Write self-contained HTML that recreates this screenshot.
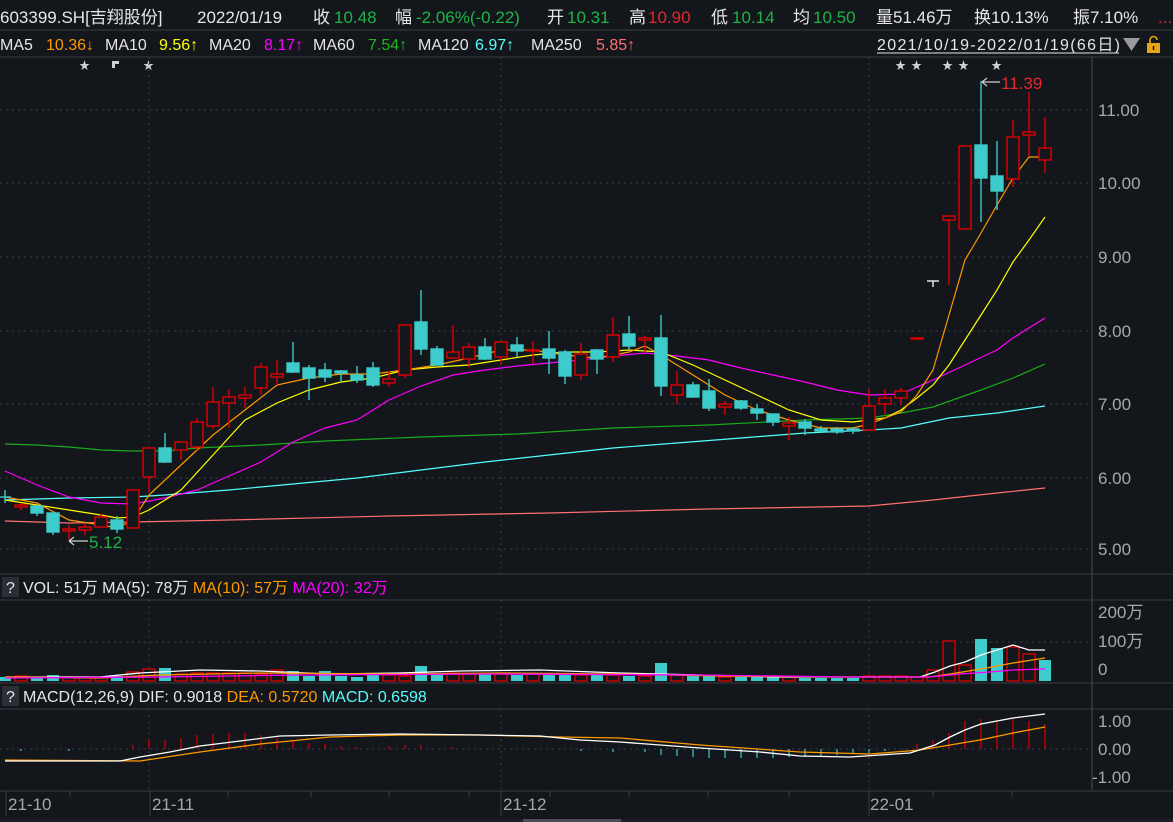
<!DOCTYPE html>
<html><head><meta charset="utf-8">
<style>
html,body{margin:0;padding:0;background:#13161b;width:1173px;height:822px;overflow:hidden}
svg{display:block}
text{font-family:"Liberation Sans","Noto Sans CJK SC",sans-serif}
</style></head>
<body>
<svg width="1173" height="822" viewBox="0 0 1173 822" xmlns="http://www.w3.org/2000/svg">
<rect width="1173" height="822" fill="#13161b"/>
<g font-size="17" fill="#e6e6e6">
<text x="0" y="23">603399.SH[吉翔股份]</text>
<text x="197" y="23">2022/01/19</text>
<text x="313" y="23">收</text><text x="334" y="23" fill="#1db446">10.48</text>
<text x="395" y="23">幅</text><text x="416" y="23" fill="#1db446">-2.06%(-0.22)</text>
<text x="547" y="23">开</text><text x="567" y="23" fill="#1db446">10.31</text>
<text x="629" y="23">高</text><text x="648" y="23" fill="#e8262b">10.90</text>
<text x="711" y="23">低</text><text x="732" y="23" fill="#1db446">10.14</text>
<text x="793" y="23">均</text><text x="813" y="23" fill="#1db446">10.50</text>
<text x="876" y="23">量51.46万</text>
<text x="974" y="23">换10.13%</text>
<text x="1073" y="23">振7.10%</text>
<text x="1158" y="23" fill="#e8262b">...</text>
</g>
<line x1="0" y1="30" x2="1173" y2="30" stroke="#3a3d44"/>
<g font-size="16" fill="#e6e6e6">
<text x="0" y="50">MA5</text><text x="46" y="50" fill="#ff9900">10.36↓</text>
<text x="105" y="50">MA10</text><text x="159" y="50" fill="#ffff00">9.56↑</text>
<text x="209" y="50">MA20</text><text x="264" y="50" fill="#ff00ff">8.17↑</text>
<text x="313" y="50">MA60</text><text x="368" y="50" fill="#1db41d">7.54↑</text>
<text x="418" y="50">MA120</text><text x="475" y="50" fill="#55ffff">6.97↑</text>
<text x="531" y="50">MA250</text><text x="596" y="50" fill="#ff6f6f">5.85↑</text>
<text x="877" y="50" textLength="243">2021/10/19-2022/01/19(66日)</text>
</g>
<line x1="877" y1="53" x2="1119" y2="53" stroke="#e6e6e6"/>
<polygon points="1123,38 1140,38 1131.5,51" fill="#9a9a9a"/>
<rect x="1147" y="43" width="13" height="10" fill="#e8a317"/>
<path d="M1150,43 v-3 a3.5,3.5 0 0 1 7,0" stroke="#e8a317" stroke-width="1.6" fill="none"/>
<line x1="1153.5" y1="46" x2="1153.5" y2="50" stroke="#13161b" stroke-width="1.5"/>
<line x1="0" y1="57" x2="1173" y2="57" stroke="#3a3d44"/>
<g font-size="11" fill="#cfcfcf">
<text x="79" y="69">★</text><text x="143" y="69">★</text>
<text x="895" y="69">★</text><text x="911" y="69">★</text><text x="942" y="69">★</text><text x="958" y="69">★</text><text x="991" y="69">★</text>
</g>
<path d="M112,61h7v3h-4v4h-3z" fill="#cfcfcf"/>
<line x1="1092" y1="57" x2="1092" y2="790" stroke="#4a4d54"/>
<g stroke="#3a3d44" stroke-dasharray="2,4">
<line x1="0" y1="110" x2="1092" y2="110"/><line x1="0" y1="183" x2="1092" y2="183"/>
<line x1="0" y1="257" x2="1092" y2="257"/><line x1="0" y1="331" x2="1092" y2="331"/>
<line x1="0" y1="404" x2="1092" y2="404"/><line x1="0" y1="478" x2="1092" y2="478"/>
<line x1="0" y1="549" x2="1092" y2="549"/>
<line x1="149" y1="57" x2="149" y2="574"/><line x1="501" y1="57" x2="501" y2="574"/><line x1="869" y1="57" x2="869" y2="574"/>
<line x1="0" y1="642" x2="1092" y2="642"/>
<line x1="149" y1="600" x2="149" y2="683"/><line x1="501" y1="600" x2="501" y2="683"/><line x1="869" y1="600" x2="869" y2="683"/>
<line x1="0" y1="749" x2="1092" y2="749"/>
<line x1="149" y1="709" x2="149" y2="790"/><line x1="501" y1="709" x2="501" y2="790"/><line x1="869" y1="709" x2="869" y2="790"/>
</g>
<g font-size="17" fill="#a8a8a8">
<text x="1098" y="116">11.00</text><text x="1098" y="189">10.00</text><text x="1098" y="263">9.00</text>
<text x="1098" y="337">8.00</text><text x="1098" y="410">7.00</text><text x="1098" y="484">6.00</text>
<text x="1098" y="555">5.00</text>
<text x="1098" y="618">200万</text><text x="1098" y="647">100万</text><text x="1098" y="675">0</text>
<text x="1098" y="727">1.00</text><text x="1098" y="755">0.00</text><text x="1092" y="783">-1.00</text>
</g>
<g fill="none" stroke-width="1.2">
<polyline stroke="#ff7070" points="5,521 69,523 133,522 229,520 389,516 549,513 709,509 869,506 933,500 997,493 1045,488"/>
<polyline stroke="#55ffff" points="5,500 69,498 133,497 165,495 229,490 293,484 357,478 421,470 485,462 549,455 613,448 677,443 741,438 805,433 869,430 901,428 949,418 997,413 1045,406"/>
<polyline stroke="#1aaa1a" points="5,444 37,445 69,447 101,450 133,451 165,451 197,448 261,445 325,441 421,437 517,434 613,428 709,425 805,420 869,418 901,413 933,407 981,390 1013,378 1045,364"/>
<polyline stroke="#ff00ff" points="5,471 37,485 69,497 101,503 133,504 165,498 197,490 229,476 261,462 293,442 325,428 357,420 389,400 421,386 453,375 485,370 517,366 549,363 581,360 613,356 645,353 677,356 709,360 741,368 773,375 805,382 837,390 869,395 901,394 933,380 965,365 997,350 1013,338 1045,318"/>
<polyline stroke="#ffff00" points="5,500 37,505 69,510 101,515 117,518 133,517 149,510 181,490 213,455 245,420 277,403 309,390 341,382 373,378 405,370 437,367 469,365 501,360 533,355 565,352 597,352 629,350 661,352 693,365 725,380 757,395 789,410 821,420 853,422 885,418 901,410 917,398 933,385 949,365 965,340 981,315 997,290 1013,262 1029,240 1045,217"/>
<polyline stroke="#ff9900" points="5,497 37,503 69,520 101,525 117,528 133,520 149,495 181,465 213,435 245,410 277,385 309,378 341,374 373,374 405,370 437,365 469,358 501,350 533,350 565,355 597,358 629,352 645,346 661,355 693,375 725,395 757,410 789,420 821,428 853,428 869,424 901,412 917,395 933,370 949,315 965,260 981,233 997,205 1013,178 1029,157 1045,157"/>
</g>
<g stroke="#e00000" stroke-width="1.4" fill="#13161b">
<line x1="21" y1="503" x2="21" y2="510"/><rect x="15" y="505" width="12" height="2"/>
<line x1="69" y1="525" x2="69" y2="540"/><rect x="63" y="529" width="12" height="2"/>
<line x1="85" y1="524" x2="85" y2="535"/><rect x="79" y="527" width="12" height="3"/>
<line x1="101" y1="514" x2="101" y2="527"/><rect x="95" y="517" width="12" height="10"/>
<rect x="127" y="490" width="12" height="38"/>
<line x1="149" y1="448" x2="149" y2="492"/><rect x="143" y="448" width="12" height="29"/>
<line x1="181" y1="442" x2="181" y2="460"/><rect x="175" y="442" width="12" height="8"/>
<line x1="197" y1="418" x2="197" y2="450"/><rect x="191" y="422" width="12" height="25"/>
<line x1="213" y1="387" x2="213" y2="429"/><rect x="207" y="402" width="12" height="24"/>
<line x1="229" y1="389" x2="229" y2="428"/><rect x="223" y="397" width="12" height="6"/>
<line x1="245" y1="387" x2="245" y2="408"/><rect x="239" y="395" width="12" height="3"/>
<line x1="261" y1="363" x2="261" y2="395"/><rect x="255" y="367" width="12" height="21"/>
<line x1="277" y1="360" x2="277" y2="385"/><rect x="271" y="374" width="12" height="3"/>
<line x1="389" y1="371" x2="389" y2="387"/><rect x="383" y="379" width="12" height="4"/>
<line x1="405" y1="325" x2="405" y2="378"/><rect x="399" y="325" width="12" height="50"/>
<line x1="453" y1="325" x2="453" y2="358"/><rect x="447" y="352" width="12" height="6"/>
<line x1="469" y1="343" x2="469" y2="367"/><rect x="463" y="347" width="12" height="12"/>
<line x1="501" y1="341" x2="501" y2="365"/><rect x="495" y="342" width="12" height="15"/>
<line x1="533" y1="341" x2="533" y2="364"/><rect x="527" y="350" width="12" height="1"/>
<line x1="581" y1="343" x2="581" y2="380"/><rect x="575" y="354" width="12" height="21"/>
<line x1="613" y1="317" x2="613" y2="362"/><rect x="607" y="335" width="12" height="22"/>
<line x1="645" y1="336" x2="645" y2="352"/><rect x="639" y="338" width="12" height="2"/>
<line x1="677" y1="371" x2="677" y2="404"/><rect x="671" y="385" width="12" height="10"/>
<line x1="725" y1="401" x2="725" y2="415"/><rect x="719" y="404" width="12" height="3"/>
<line x1="789" y1="417" x2="789" y2="440"/><rect x="783" y="423" width="12" height="3"/>
<line x1="869" y1="389" x2="869" y2="430"/><rect x="863" y="406" width="12" height="24"/>
<line x1="885" y1="389" x2="885" y2="414"/><rect x="879" y="398" width="12" height="6"/>
<line x1="901" y1="388" x2="901" y2="405"/><rect x="895" y="391" width="12" height="7"/>
<rect x="911" y="338" width="12" height="1"/>
<line x1="949" y1="216" x2="949" y2="285"/><rect x="943" y="216" width="12" height="4"/>
<rect x="959" y="146" width="12" height="83"/>
<line x1="1013" y1="120" x2="1013" y2="187"/><rect x="1007" y="137" width="12" height="42"/>
<line x1="1029" y1="92" x2="1029" y2="156"/><rect x="1023" y="132" width="12" height="3"/>
<line x1="1045" y1="117" x2="1045" y2="173"/><rect x="1039" y="148" width="12" height="12"/>
</g>
<g stroke="#3dcbcb" stroke-width="1.4" fill="#3dcbcb">
<line x1="5" y1="490" x2="5" y2="503"/><line x1="0" y1="497" x2="11" y2="497"/>
<line x1="37" y1="506" x2="37" y2="516"/><rect x="31" y="506" width="12" height="7"/>
<line x1="53" y1="513" x2="53" y2="535"/><rect x="47" y="513" width="12" height="19"/>
<line x1="117" y1="516" x2="117" y2="533"/><rect x="111" y="520" width="12" height="9"/>
<line x1="165" y1="433" x2="165" y2="463"/><rect x="159" y="448" width="12" height="14"/>
<line x1="293" y1="342" x2="293" y2="373"/><rect x="287" y="363" width="12" height="9"/>
<line x1="309" y1="365" x2="309" y2="400"/><rect x="303" y="368" width="12" height="10"/>
<line x1="325" y1="363" x2="325" y2="382"/><rect x="319" y="370" width="12" height="7"/>
<line x1="341" y1="370" x2="341" y2="382"/><rect x="335" y="371" width="12" height="2"/>
<line x1="357" y1="366" x2="357" y2="383"/><rect x="351" y="375" width="12" height="5"/>
<line x1="373" y1="362" x2="373" y2="387"/><rect x="367" y="368" width="12" height="17"/>
<line x1="421" y1="290" x2="421" y2="355"/><rect x="415" y="322" width="12" height="27"/>
<line x1="437" y1="346" x2="437" y2="365"/><rect x="431" y="349" width="12" height="16"/>
<line x1="485" y1="338" x2="485" y2="360"/><rect x="479" y="347" width="12" height="12"/>
<line x1="517" y1="337" x2="517" y2="357"/><rect x="511" y="345" width="12" height="6"/>
<line x1="549" y1="331" x2="549" y2="374"/><rect x="543" y="349" width="12" height="9"/>
<line x1="565" y1="350" x2="565" y2="384"/><rect x="559" y="352" width="12" height="24"/>
<line x1="597" y1="349" x2="597" y2="374"/><rect x="591" y="350" width="12" height="9"/>
<line x1="629" y1="316" x2="629" y2="350"/><rect x="623" y="334" width="12" height="12"/>
<line x1="661" y1="315" x2="661" y2="396"/><rect x="655" y="338" width="12" height="48"/>
<line x1="693" y1="382" x2="693" y2="398"/><rect x="687" y="385" width="12" height="12"/>
<line x1="709" y1="379" x2="709" y2="411"/><rect x="703" y="391" width="12" height="17"/>
<line x1="741" y1="400" x2="741" y2="410"/><rect x="735" y="401" width="12" height="7"/>
<line x1="757" y1="404" x2="757" y2="420"/><rect x="751" y="409" width="12" height="4"/>
<line x1="773" y1="414" x2="773" y2="426"/><rect x="767" y="414" width="12" height="8"/>
<line x1="805" y1="419" x2="805" y2="435"/><rect x="799" y="422" width="12" height="6"/>
<line x1="821" y1="426" x2="821" y2="433"/><rect x="815" y="429" width="12" height="2"/>
<line x1="837" y1="427" x2="837" y2="434"/><rect x="831" y="429" width="12" height="3"/>
<line x1="853" y1="427" x2="853" y2="434"/><rect x="847" y="429" width="12" height="2"/>
<line x1="981" y1="81" x2="981" y2="222"/><rect x="975" y="145" width="12" height="33"/>
<line x1="997" y1="141" x2="997" y2="210"/><rect x="991" y="176" width="12" height="15"/>
</g>
<g stroke="#ffffff" stroke-width="1.3"><line x1="927" y1="281" x2="939" y2="281"/><line x1="933" y1="281" x2="933" y2="287"/></g>
<g stroke="#cfcfcf" fill="none" stroke-width="1.2">
<path d="M982,82 H1000 M982,82 l5,-4 M982,82 l5,4"/>
<path d="M69,541 H88 M69,541 l5,-4 M69,541 l5,4"/>
</g>
<text x="1001" y="89" font-size="17" fill="#e8262b">11.39</text>
<text x="89" y="548" font-size="17" fill="#1db446">5.12</text>
<line x1="0" y1="574" x2="1173" y2="574" stroke="#3a3d44"/>
<rect x="2" y="577" width="17" height="20" fill="#2b2e35"/>
<g font-size="16" fill="#e6e6e6">
<text x="6" y="593">?</text>
<text x="23" y="593">VOL: 51万 MA(5): 78万 <tspan fill="#ff9900">MA(10): 57万</tspan> <tspan fill="#ff00ff">MA(20): 32万</tspan></text>
</g>
<line x1="0" y1="600" x2="1173" y2="600" stroke="#3a3d44"/>
<g stroke="#e00000" stroke-width="1.3" fill="#13161b">
<rect x="15" y="676" width="12" height="5"/><rect x="63" y="677" width="12" height="4"/><rect x="79" y="677" width="12" height="4"/><rect x="95" y="677" width="12" height="4"/>
<rect x="127" y="672" width="12" height="9"/><rect x="143" y="669" width="12" height="12"/><rect x="175" y="674" width="12" height="7"/><rect x="191" y="673" width="12" height="8"/>
<rect x="207" y="673" width="12" height="8"/><rect x="223" y="673" width="12" height="8"/><rect x="239" y="673" width="12" height="8"/><rect x="255" y="674" width="12" height="7"/>
<rect x="271" y="670" width="12" height="11"/><rect x="383" y="675" width="12" height="6"/><rect x="399" y="676" width="12" height="5"/><rect x="447" y="673" width="12" height="8"/>
<rect x="463" y="674" width="12" height="7"/><rect x="495" y="674" width="12" height="7"/><rect x="527" y="674" width="12" height="7"/><rect x="575" y="675" width="12" height="6"/>
<rect x="607" y="675" width="12" height="6"/><rect x="639" y="676" width="12" height="5"/><rect x="671" y="675" width="12" height="6"/><rect x="719" y="677" width="12" height="4"/>
<rect x="783" y="677" width="12" height="4"/><rect x="863" y="676" width="12" height="5"/><rect x="879" y="676" width="12" height="5"/><rect x="895" y="676" width="12" height="5"/>
<rect x="911" y="677" width="12" height="4"/><rect x="927" y="670" width="12" height="11"/><rect x="943" y="641" width="12" height="40"/><rect x="959" y="665" width="12" height="16"/>
<rect x="1007" y="647" width="12" height="34"/><rect x="1023" y="654" width="12" height="27"/>
</g>
<g fill="#3dcbcb">
<rect x="0" y="677" width="11" height="4"/><rect x="31" y="677" width="12" height="4"/><rect x="47" y="675" width="12" height="6"/><rect x="111" y="676" width="12" height="5"/>
<rect x="159" y="668" width="12" height="13"/><rect x="287" y="671" width="12" height="10"/><rect x="303" y="676" width="12" height="5"/><rect x="319" y="671" width="12" height="10"/>
<rect x="335" y="676" width="12" height="5"/><rect x="351" y="677" width="12" height="4"/><rect x="367" y="675" width="12" height="6"/><rect x="415" y="666" width="12" height="15"/>
<rect x="431" y="674" width="12" height="7"/><rect x="479" y="674" width="12" height="7"/><rect x="511" y="675" width="12" height="6"/><rect x="543" y="675" width="12" height="6"/>
<rect x="559" y="675" width="12" height="6"/><rect x="591" y="675" width="12" height="6"/><rect x="623" y="676" width="12" height="5"/><rect x="655" y="663" width="12" height="18"/>
<rect x="687" y="675" width="12" height="6"/><rect x="703" y="676" width="12" height="5"/><rect x="735" y="677" width="12" height="4"/><rect x="751" y="677" width="12" height="4"/>
<rect x="767" y="677" width="12" height="4"/><rect x="799" y="678" width="12" height="3"/><rect x="815" y="678" width="12" height="3"/><rect x="831" y="678" width="12" height="3"/>
<rect x="847" y="678" width="12" height="3"/><rect x="975" y="639" width="12" height="42"/><rect x="991" y="648" width="12" height="33"/><rect x="1039" y="660" width="12" height="21"/>
</g>
<g fill="none" stroke-width="1.3">
<polyline stroke="#ffffff" points="5,677 100,677 140,673 200,670 260,671 330,674 400,673 460,671 540,670 620,673 700,675 780,677 850,677 920,677 935,672 950,666 965,662 981,655 997,650 1013,645 1029,650 1045,650"/>
<polyline stroke="#ff9900" points="5,677 100,678 160,675 260,673 400,674 500,673 620,674 720,676 850,677 930,677 950,674 981,669 1013,663 1045,658"/>
<polyline stroke="#ff00ff" points="5,678 160,677 300,675 500,674 700,675 850,677 930,677 960,674 990,672 1013,670 1045,669"/>
</g>
<line x1="0" y1="683" x2="1173" y2="683" stroke="#3a3d44"/>
<rect x="2" y="686" width="17" height="20" fill="#2b2e35"/>
<g font-size="16" fill="#e6e6e6">
<text x="6" y="702">?</text>
<text x="23" y="702">MACD(12,26,9) DIF: 0.9018 <tspan fill="#ff9900">DEA: 0.5720</tspan> <tspan fill="#55ffff">MACD: 0.6598</tspan></text>
</g>
<line x1="0" y1="709" x2="1173" y2="709" stroke="#3a3d44"/>
<g stroke="#e00000" stroke-width="1.2">
<line x1="133" y1="749" x2="133" y2="745"/><line x1="149" y1="749" x2="149" y2="739"/><line x1="165" y1="749" x2="165" y2="740"/><line x1="181" y1="749" x2="181" y2="738"/>
<line x1="197" y1="749" x2="197" y2="735"/><line x1="213" y1="749" x2="213" y2="734"/><line x1="229" y1="749" x2="229" y2="733"/><line x1="245" y1="749" x2="245" y2="733"/>
<line x1="261" y1="749" x2="261" y2="735"/><line x1="277" y1="749" x2="277" y2="738"/><line x1="293" y1="749" x2="293" y2="740"/><line x1="309" y1="749" x2="309" y2="743"/>
<line x1="325" y1="749" x2="325" y2="744"/><line x1="341" y1="749" x2="341" y2="746"/><line x1="357" y1="749" x2="357" y2="747"/><line x1="389" y1="749" x2="389" y2="746"/>
<line x1="405" y1="749" x2="405" y2="745"/><line x1="421" y1="749" x2="421" y2="745"/><line x1="453" y1="749" x2="453" y2="747"/>
<line x1="917" y1="749" x2="917" y2="744"/><line x1="933" y1="749" x2="933" y2="740"/><line x1="949" y1="749" x2="949" y2="733"/><line x1="965" y1="749" x2="965" y2="721"/>
<line x1="981" y1="749" x2="981" y2="719"/><line x1="997" y1="749" x2="997" y2="722"/><line x1="1013" y1="749" x2="1013" y2="719"/><line x1="1029" y1="749" x2="1029" y2="721"/><line x1="1045" y1="749" x2="1045" y2="724"/>
</g>
<g stroke="#3dcbcb" stroke-width="1.2">
<line x1="21" y1="749" x2="21" y2="751"/><line x1="69" y1="749" x2="69" y2="751"/>
<line x1="581" y1="749" x2="581" y2="751"/><line x1="613" y1="749" x2="613" y2="752"/><line x1="645" y1="749" x2="645" y2="752"/><line x1="661" y1="749" x2="661" y2="755"/>
<line x1="677" y1="749" x2="677" y2="756"/><line x1="693" y1="749" x2="693" y2="757"/><line x1="709" y1="749" x2="709" y2="758"/><line x1="725" y1="749" x2="725" y2="758"/>
<line x1="741" y1="749" x2="741" y2="758"/><line x1="757" y1="749" x2="757" y2="758"/><line x1="773" y1="749" x2="773" y2="758"/><line x1="789" y1="749" x2="789" y2="757"/>
<line x1="805" y1="749" x2="805" y2="757"/><line x1="821" y1="749" x2="821" y2="756"/><line x1="837" y1="749" x2="837" y2="755"/><line x1="853" y1="749" x2="853" y2="754"/><line x1="869" y1="749" x2="869" y2="753"/><line x1="885" y1="749" x2="885" y2="751"/>
</g>
<g fill="none" stroke-width="1.3">
<polyline stroke="#ff9900" points="5,760 140,761 200,752 260,744 330,737 400,735 480,735 560,737 620,738 700,745 800,752 870,754 920,750 950,745 980,740 1013,733 1045,727"/>
<polyline stroke="#ffffff" points="5,761 120,761 140,757 170,752 200,746 240,741 280,736 330,735 400,734 480,735 540,736 580,740 620,742 700,748 760,752 800,756 850,757 880,755 910,753 935,745 950,737 965,730 981,724 997,721 1013,718 1029,716 1045,714"/>
</g>
<line x1="0" y1="791" x2="1173" y2="791" stroke="#3a3d44"/>
<g stroke="#3a3d44">
<line x1="6" y1="791" x2="6" y2="816"/><line x1="150" y1="791" x2="150" y2="816"/><line x1="501" y1="791" x2="501" y2="816"/><line x1="869" y1="791" x2="869" y2="816"/>
<line x1="70" y1="791" x2="70" y2="797"/><line x1="228" y1="791" x2="228" y2="797"/><line x1="311" y1="791" x2="311" y2="797"/><line x1="389" y1="791" x2="389" y2="797"/>
<line x1="469" y1="791" x2="469" y2="797"/><line x1="550" y1="791" x2="550" y2="797"/><line x1="629" y1="791" x2="629" y2="797"/><line x1="708" y1="791" x2="708" y2="797"/>
<line x1="789" y1="791" x2="789" y2="797"/><line x1="933" y1="791" x2="933" y2="797"/><line x1="1012" y1="791" x2="1012" y2="797"/>
</g>
<g font-size="17" fill="#a8a8a8">
<text x="8" y="810">21-10</text><text x="152" y="810">21-11</text><text x="503" y="810">21-12</text><text x="870" y="810">22-01</text>
</g>
<rect x="0" y="819" width="1173" height="3" fill="#1c1f25"/>
<rect x="523" y="819" width="98" height="3" fill="#4a4d54"/>
</svg>
</body></html>
